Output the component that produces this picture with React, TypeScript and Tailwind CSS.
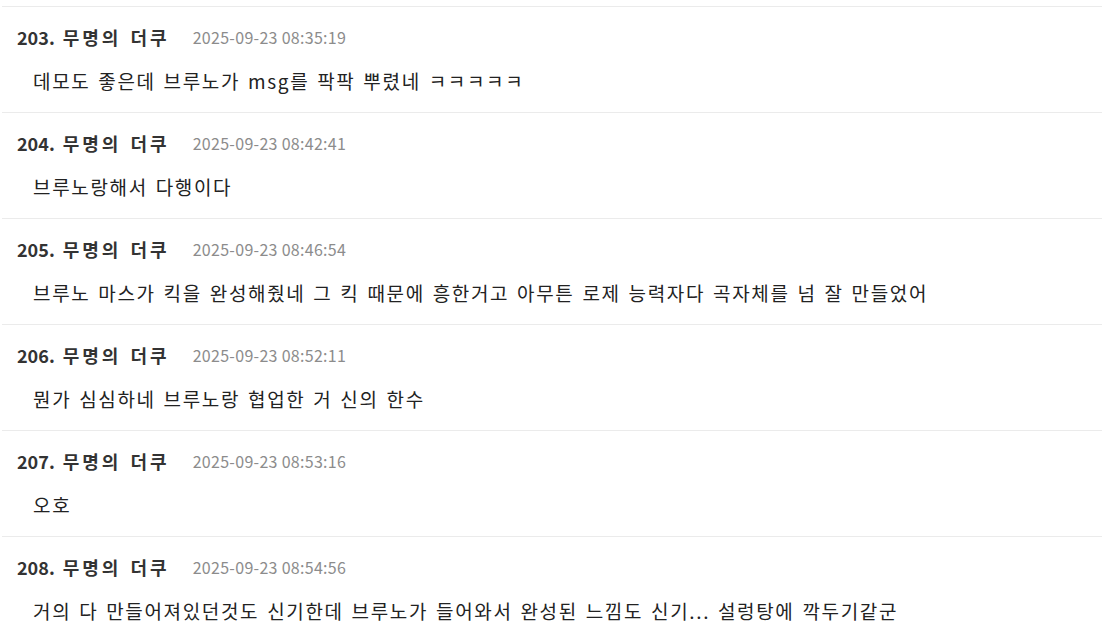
import React from "react";

const items = [
  { n: 203, t: "2025-09-23 08:35:19", c: "데모도 좋은데 브루노가 msg를 팍팍 뿌렸네 ㅋㅋㅋㅋㅋ" },
  { n: 204, t: "2025-09-23 08:42:41", c: "브루노랑해서 다행이다" },
  { n: 205, t: "2025-09-23 08:46:54", c: "브루노 마스가 킥을 완성해줬네 그 킥 때문에 흥한거고 아무튼 로제 능력자다 곡자체를 넘 잘 만들었어" },
  { n: 206, t: "2025-09-23 08:52:11", c: "뭔가 심심하네 브루노랑 협업한 거 신의 한수" },
  { n: 207, t: "2025-09-23 08:53:16", c: "오호" },
  { n: 208, t: "2025-09-23 08:54:56", c: "거의 다 만들어져있던것도 신기한데 브루노가 들어와서 완성된 느낌도 신기... 설렁탕에 깍두기같군" },
];

export default function App() {
  return (
    <div
      className="w-[1102px] h-[637px] overflow-hidden bg-white pt-[6px] pl-[2px]"
      style={{ fontFamily: '"Noto Sans CJK KR", "Noto Sans", sans-serif' }}
    >
      {items.map((it) => (
        <div key={it.n} className="border-t border-[#ebebeb] pl-[15px] pt-[18px] pb-[17px]">
          <div className="flex h-[24px] items-center whitespace-nowrap">
            <span className="text-[18px] font-bold text-[#333333]">
              {it.n}.
            </span>
            <span className="ml-[8px] text-[18px] font-bold tracking-[3px] [word-spacing:2px] text-[#333333]">
              무명의 더쿠
            </span>
            <span className="ml-[23px] text-[16px] tracking-[0.3px] text-[#8c8c8c]">{it.t}</span>
          </div>
          <div className="mt-[18px] flex h-[28px] items-center whitespace-nowrap pl-[16px] text-[19px] tracking-[1.65px] [word-spacing:2px] text-[#222222]">
            {it.c}
          </div>
        </div>
      ))}
    </div>
  );
}
